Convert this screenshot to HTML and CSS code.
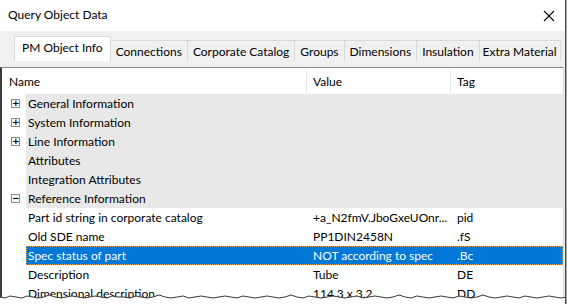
FILE: index.html
```html
<!DOCTYPE html>
<html lang="en">
<head>
    <meta charset="UTF-8">
    <title>Query Object Data</title>
    <link rel="stylesheet" href="styles.css">
</head>
<body>
    <div class="window">
        <div class="titlebar">
            <span class="title">Query Object Data</span>
            <svg class="close" width="12" height="12" viewBox="0 0 12 12">
                <path d="M1 1L11 11M11 1L1 11" stroke="#000" stroke-width="1.1" fill="none"/>
            </svg>
        </div>
        <div class="dialog">
            <div class="tabs">
                <div class="tab active">PM Object Info</div>
                <div class="tab">Connections</div>
                <div class="tab">Corporate Catalog</div>
                <div class="tab">Groups</div>
                <div class="tab">Dimensions</div>
                <div class="tab">Insulation</div>
                <div class="tab">Extra Material</div>
            </div>
            <div class="list">
                <div class="header">
                    <div class="col-name">Name</div>
                    <div class="col-value">Value</div>
                    <div class="col-tag">Tag</div>
                </div>
                <div class="row group">
                    <div class="toggle"><span class="box">+</span></div>
                    <div class="cell name">General Information</div>
                    <div class="cell"></div>
                    <div class="cell"></div>
                </div>
                <div class="row group">
                    <div class="toggle"><span class="box">+</span></div>
                    <div class="cell name">System Information</div>
                    <div class="cell"></div>
                    <div class="cell"></div>
                </div>
                <div class="row group">
                    <div class="toggle"><span class="box">+</span></div>
                    <div class="cell name">Line Information</div>
                    <div class="cell"></div>
                    <div class="cell"></div>
                </div>
                <div class="row group">
                    <div class="toggle"></div>
                    <div class="cell name">Attributes</div>
                    <div class="cell"></div>
                    <div class="cell"></div>
                </div>
                <div class="row group">
                    <div class="toggle"></div>
                    <div class="cell name">Integration Attributes</div>
                    <div class="cell"></div>
                    <div class="cell"></div>
                </div>
                <div class="row group">
                    <div class="toggle"><span class="box minus">&minus;</span></div>
                    <div class="cell name">Reference Information</div>
                    <div class="cell"></div>
                    <div class="cell"></div>
                </div>
                <div class="row">
                    <div class="toggle"></div>
                    <div class="cell name">Part id string in corporate catalog</div>
                    <div class="cell value">+a_N2fmV.JboGxeUOnr...</div>
                    <div class="cell tag">pid</div>
                </div>
                <div class="row">
                    <div class="toggle"></div>
                    <div class="cell name">Old SDE name</div>
                    <div class="cell value">PP1DIN2458N</div>
                    <div class="cell tag">.fS</div>
                </div>
                <div class="row selected">
                    <div class="toggle"></div>
                    <div class="cell name">Spec status of part</div>
                    <div class="cell value">NOT according to spec</div>
                    <div class="cell tag">.Bc</div>
                </div>
                <div class="row">
                    <div class="toggle"></div>
                    <div class="cell name">Description</div>
                    <div class="cell value">Tube</div>
                    <div class="cell tag">DE</div>
                </div>
                <div class="row">
                    <div class="toggle"></div>
                    <div class="cell name">Dimensional description</div>
                    <div class="cell value">114.3 x 3.2</div>
                    <div class="cell tag">DD</div>
                </div>
            </div>
        </div>
        <svg class="torn" width="567" height="12" viewBox="0 0 567 12">
            <polygon fill="#fff" points="0,5 5,6 10,4 16,5 22,6 27,4 33,5 38,6 44,5 49,3 55,5 61,6 66,5 72,4 78,5 84,6 90,5 95,4 101,5 107,6 112,4 118,5 124,5 130,6 136,4 141,5 147,6 153,5 159,3 165,5 171,6 177,5 183,4 189,6 195,5 201,4 207,5 213,6 219,5 225,4 231,5 237,6 243,4 249,5 255,6 261,5 267,4 273,5 279,6 285,5 291,3 297,5 303,6 309,4 315,5 321,6 327,5 333,4 339,5 345,6 351,5 357,4 363,6 369,5 375,4 381,5 387,6 393,5 399,3 405,5 411,6 417,4 423,5 429,6 435,5 441,4 447,5 453,6 459,4 465,5 471,6 477,5 483,3 489,5 495,6 501,5 507,4 513,5 519,6 525,4 531,5 537,6 543,5 549,4 555,5 561,6 567,5 567,12 0,12"/>
            <polyline fill="none" stroke="#3a3a3a" stroke-width="1" points="0,5 5,6 10,4 16,5 22,6 27,4 33,5 38,6 44,5 49,3 55,5 61,6 66,5 72,4 78,5 84,6 90,5 95,4 101,5 107,6 112,4 118,5 124,5 130,6 136,4 141,5 147,6 153,5 159,3 165,5 171,6 177,5 183,4 189,6 195,5 201,4 207,5 213,6 219,5 225,4 231,5 237,6 243,4 249,5 255,6 261,5 267,4 273,5 279,6 285,5 291,3 297,5 303,6 309,4 315,5 321,6 327,5 333,4 339,5 345,6 351,5 357,4 363,6 369,5 375,4 381,5 387,6 393,5 399,3 405,5 411,6 417,4 423,5 429,6 435,5 441,4 447,5 453,6 459,4 465,5 471,6 477,5 483,3 489,5 495,6 501,5 507,4 513,5 519,6 525,4 531,5 537,6 543,5 549,4 555,5 561,6 567,5"/>
        </svg>
    </div>
</body>
</html>
```

FILE: styles.css
```css
html, body {
    margin: 0;
    padding: 0;
    background: #fff;
}

body {
    font-family: 'Lato', 'Noto Sans', sans-serif;
    font-size: 12px;
    color: #000;
    overflow: hidden;
}

.window {
    position: relative;
    width: 565px;
    height: 304px;
    border-right: 1px solid #4a4a4a;
    box-shadow: 1px 0 1px rgba(0, 0, 0, 0.35);
    overflow: hidden;
    background: #f0f0f0;
}

.titlebar {
    height: 31px;
    background: #fff;
    display: flex;
    align-items: center;
    justify-content: space-between;
    padding: 0 10px 0 8px;
}

.title {
    line-height: 1;
    margin-top: -1px;
}

.dialog {
    padding-top: 6px;
}

.tabs {
    display: flex;
    align-items: flex-end;
    height: 24px;
    padding-left: 14px;
}

.tab {
    height: 20px;
    line-height: 21px;
    padding: 0 5px;
    border: 1px solid #d9d9d9;
    border-bottom: none;
    border-left: none;
    background: #f0f0f0;
    white-space: nowrap;
}

.tab.active {
    height: 24px;
    line-height: 22px;
    padding: 0 7px;
    background: #fff;
    border-left: 1px solid #d9d9d9;
    border-right: 1px solid #d9d9d9;
}

.tab:last-child {
    padding: 0 3px;
}

.list {
    margin-top: 6px;
    width: 561px;
    height: 240px;
    background: #fff;
    border-top: 1px solid #828790;
    border-left: 2px solid #3c3c3c;
    border-right: 1px solid #dcdcdc;
}

.header {
    display: grid;
    grid-template-columns: 304px 144px 1fr;
    height: 26px;
}

.header > div {
    display: flex;
    align-items: center;
    padding-left: 6px;
    border-left: 1px solid #e5e5e5;
    margin: 2px 0 1px;
}

.header .col-name {
    border-left: none;
    padding-left: 7px;
}

.row {
    display: grid;
    grid-template-columns: 24px 280px 144px 1fr;
    height: 19px;
    line-height: 19px;
    white-space: nowrap;
}

.toggle {
    display: flex;
    align-items: center;
    padding-left: 9px;
}

.box {
    width: 7px;
    height: 7px;
    border: 1px solid #8c8c8c;
    font-size: 9px;
    line-height: 7px;
    text-align: center;
    color: #000;
    font-family: 'DejaVu Sans', sans-serif;
    font-weight: bold;
}

.cell {
    overflow: hidden;
}

.cell.name {
    padding-left: 2px;
}

.cell.value,
.cell.tag {
    padding-left: 7px;
}

.row.group .cell {
    background: #e8e8e8;
}

.row.selected .cell {
    background: #0078d7;
    color: #fff;
}

.row.selected {
    position: relative;
}

.row.selected::after {
    content: '';
    position: absolute;
    left: 24px;
    right: 0;
    top: 0;
    bottom: 0;
    border: 1px dotted #f0a04b;
}

.torn {
    position: absolute;
    left: 0;
    bottom: 0;
}
```
